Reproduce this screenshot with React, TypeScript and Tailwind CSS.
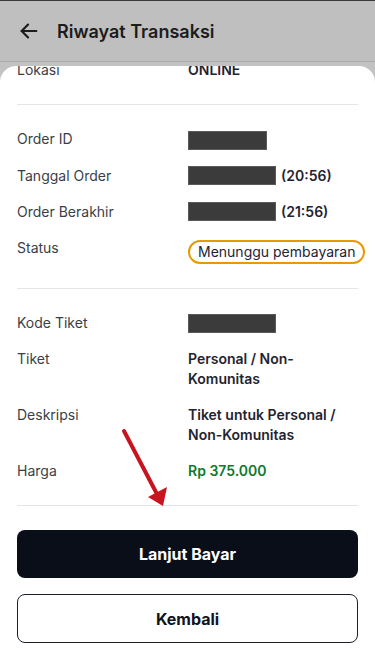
import React from 'react';

interface Row {
  label: string;
  value?: React.ReactNode;
}

const Redacted: React.FC<{ w: string }> = ({ w }) => (
  <span className={`inline-block h-[19px] ${w} bg-[#3b3b3b] border border-[#5a5a5a] align-middle`} />
);

const DetailRow: React.FC<Row> = ({ label, value }) => (
  <div className="grid grid-cols-[171px_1fr] text-[14px] leading-[20px]">
    <span className="text-[#3a3f47]">{label}</span>
    <div className="pr-4 font-semibold text-[#1f2430]">{value}</div>
  </div>
);

const BackIcon = () => (
  <svg width="22" height="22" viewBox="0 0 24 24" fill="none" stroke="#1c1c1c" strokeWidth="2.4" strokeLinecap="round" strokeLinejoin="round">
    <path d="M20 12H4" />
    <path d="M11 5l-7 7 7 7" />
  </svg>
);

export default function App() {
  return (
    <div className="relative w-[375px] h-[669px] overflow-hidden bg-[#c2c2c2]" style={{ fontFamily: 'Inter, "Noto Sans", sans-serif' }}>
      {/* header, dimmed by the sheet backdrop */}
      <div className="h-[62px] bg-[#bfbfbf] border-t border-[#3a3a3a] border-b border-b-[#aaaaaa] flex items-center gap-[17px] pl-[18px]">
        <BackIcon />
        <h1 className="text-[18px] font-semibold text-[#1c1c1c]">Riwayat Transaksi</h1>
      </div>

      <div className="mt-[4px] h-[603px] bg-white rounded-t-[16px] overflow-hidden">
        <div className="-mt-[6px] px-[17px]">
          <div className="pb-6 border-b border-[#e5e5e5]">
            <DetailRow label="Lokasi" value="ONLINE" />
          </div>

          <div className="py-6 flex flex-col gap-4 border-b border-[#e5e5e5]">
            <DetailRow label="Order ID" value={<Redacted w="w-[79px]" />} />
            <DetailRow
              label="Tanggal Order"
              value={
                <span className="flex items-center gap-[5px]">
                  <Redacted w="w-[88px]" /> (20:56)
                </span>
              }
            />
            <DetailRow
              label="Order Berakhir"
              value={
                <span className="flex items-center gap-[5px]">
                  <Redacted w="w-[88px]" /> (21:56)
                </span>
              }
            />
            <div className="grid grid-cols-[171px_1fr] text-[14px] leading-[20px]">
              <span className="text-[#3a3f47]">Status</span>
              <div className="mt-[2px]">
                <span className="inline-block rounded-full border-2 border-[#e69a00] px-[8px] text-[#1e2433] whitespace-nowrap">
                  Menunggu pembayaran
                </span>
              </div>
            </div>
          </div>

          <div className="py-6 flex flex-col gap-4 border-b border-[#e5e5e5]">
            <DetailRow label="Kode Tiket" value={<Redacted w="w-[88px]" />} />
            <DetailRow label="Tiket" value="Personal / Non-Komunitas" />
            <DetailRow label="Deskripsi" value="Tiket untuk Personal / Non-Komunitas" />
            <DetailRow label="Harga" value={<span className="text-[#0e7a2c]">Rp 375.000</span>} />
          </div>

          <div className="pt-6 flex flex-col gap-4">
            <button className="h-[48px] w-full rounded-[8px] bg-[#0a0e19] text-white text-[16px] font-bold">
              Lanjut Bayar
            </button>
            <button className="h-[49px] w-full rounded-[8px] border-[1.5px] border-[#1b1f27] bg-white text-[#0f1420] text-[16px] font-bold">
              Kembali
            </button>
          </div>
        </div>
      </div>

      {/* red annotation arrow */}
      <svg className="absolute left-0 top-0 pointer-events-none" width="375" height="669">
        <line x1="124" y1="431" x2="158" y2="496" stroke="#c8141f" strokeWidth="4" strokeLinecap="round" />
        <polygon points="163,506 148,497 167,487" fill="#c8141f" />
      </svg>
    </div>
  );
}
